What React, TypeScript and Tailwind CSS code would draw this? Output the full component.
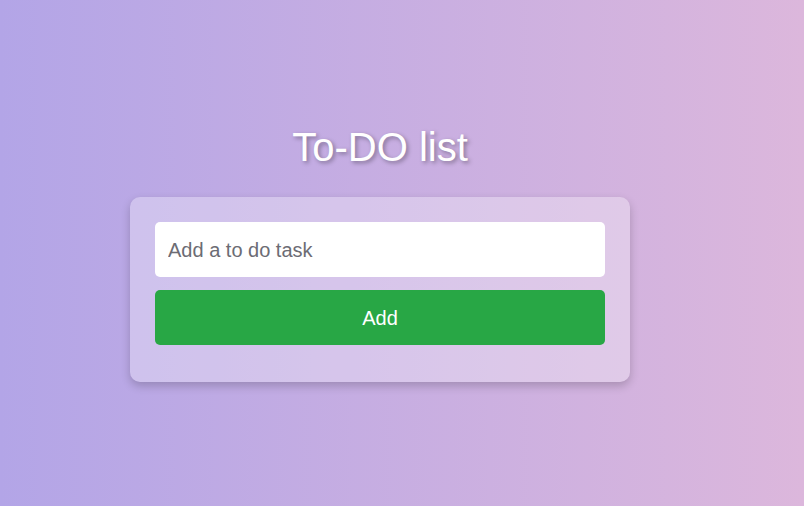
export default function App() {
  return (
    <div
      className="w-[804px] h-[506px] overflow-hidden bg-[linear-gradient(to_right,#b3a5e7,#dcb7dc)]"
      style={{ fontFamily: '"Liberation Sans", Arial, sans-serif' }}
    >
      <div className="ml-[130px] w-[500px] pt-[124px]">
        <h1 className="text-center text-[40px] leading-[46px] text-white [text-shadow:2px_2px_4px_rgba(0,0,0,0.35)]">
          To-DO list
        </h1>
        <div className="mt-[27px] rounded-[10px] bg-white/30 shadow-[0_4px_10px_rgba(0,0,0,0.2)] px-[25px] pt-[25px] pb-[37px] flex flex-col gap-[13px]">
          <input
            className="h-[55px] w-full rounded-[5px] bg-white px-[13px] pt-[2px] text-[20px] text-gray-700 placeholder:text-[#6c6c74] outline-none"
            placeholder="Add a to do task"
          />
          <button className="h-[55px] w-full rounded-[5px] bg-[#28a745] text-[20px] text-white">
            Add
          </button>
        </div>
      </div>
    </div>
  );
}
